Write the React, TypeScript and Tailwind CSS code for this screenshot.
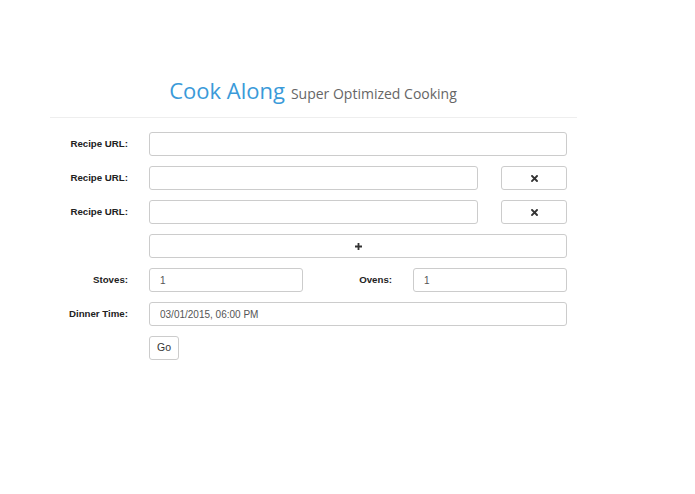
import * as React from "react";

const inputCls =
  "h-[24px] w-full rounded-[3px] border border-[#cccccc] bg-white px-[10px] text-[10px] text-[#555555] font-['Liberation_Sans',Arial,sans-serif] outline-none";
const btnCls =
  "flex h-[24px] items-center justify-center rounded-[3px] border border-[#cccccc] bg-white text-[#333333]";
const labelCls =
  "pr-[21px] text-right text-[9.7px] font-bold text-[#222222] font-['Liberation_Sans',Arial,sans-serif]";

function RemoveIcon() {
  return (
    <svg width="7" height="7" viewBox="0 0 7 7" aria-hidden="true">
      <path d="M1 1 L6 6 M6 1 L1 6" stroke="#333333" strokeWidth="1.9" strokeLinecap="square" />
    </svg>
  );
}

function PlusIcon() {
  return (
    <svg width="7" height="7" viewBox="0 0 7 7" aria-hidden="true">
      <path d="M3.5 0 V7 M0 3.5 H7" stroke="#333333" strokeWidth="1.8" />
    </svg>
  );
}

export default function App() {
  const [urls, setUrls] = React.useState<string[]>(["", "", ""]);
  const [stoves, setStoves] = React.useState("1");
  const [ovens, setOvens] = React.useState("1");
  const [dinner, setDinner] = React.useState("03/01/2015, 06:00 PM");

  return (
    <div className="min-h-[494px] bg-white">
      <div className="ml-[50px] w-[527px] pt-[79px]">
        <div className="flex items-baseline justify-center border-b border-[#eeeeee] pb-[16px] pr-[1px] font-['Open_Sans',sans-serif] leading-none">
          <span className="text-[22px] text-[#3a9ad9]">Cook Along</span>
          <span className="ml-[6px] text-[14px] text-[#666666]">Super Optimized Cooking</span>
        </div>

        <div className="mt-[14px] flex flex-col gap-[10px]">
          {urls.map((u, i) => (
            <div key={i} className="grid grid-cols-[99px_1fr_10px] items-center">
              <label className={labelCls}>Recipe URL:</label>
              {i === 0 ? (
                <input
                  className={inputCls}
                  value={u}
                  onChange={(e) => setUrls(urls.map((x, j) => (j === i ? e.target.value : x)))}
                />
              ) : (
                <div className="grid grid-cols-[1fr_66px] gap-[23px]">
                  <input
                    className={inputCls}
                    value={u}
                    onChange={(e) => setUrls(urls.map((x, j) => (j === i ? e.target.value : x)))}
                  />
                  <button className={btnCls} onClick={() => setUrls(urls.filter((_, j) => j !== i))}>
                    <RemoveIcon />
                  </button>
                </div>
              )}
              <div />
            </div>
          ))}

          <div className="grid grid-cols-[99px_1fr_10px] items-center">
            <div />
            <button className={btnCls} onClick={() => setUrls([...urls, ""])}>
              <PlusIcon />
            </button>
            <div />
          </div>

          <div className="grid grid-cols-[99px_154px_110px_154px_10px] items-center">
            <label className={labelCls}>Stoves:</label>
            <input className={inputCls} value={stoves} onChange={(e) => setStoves(e.target.value)} />
            <label className={labelCls}>Ovens:</label>
            <input className={inputCls} value={ovens} onChange={(e) => setOvens(e.target.value)} />
            <div />
          </div>

          <div className="grid grid-cols-[99px_1fr_10px] items-center">
            <label className={labelCls}>Dinner Time:</label>
            <input className={inputCls} value={dinner} onChange={(e) => setDinner(e.target.value)} />
            <div />
          </div>

          <div className="grid grid-cols-[99px_1fr_10px] items-center">
            <div />
            <div>
              <button className={`${btnCls} w-[30px] text-[10.5px] font-['Liberation_Sans',Arial,sans-serif]`}>
                Go
              </button>
            </div>
            <div />
          </div>
        </div>
      </div>
    </div>
  );
}
